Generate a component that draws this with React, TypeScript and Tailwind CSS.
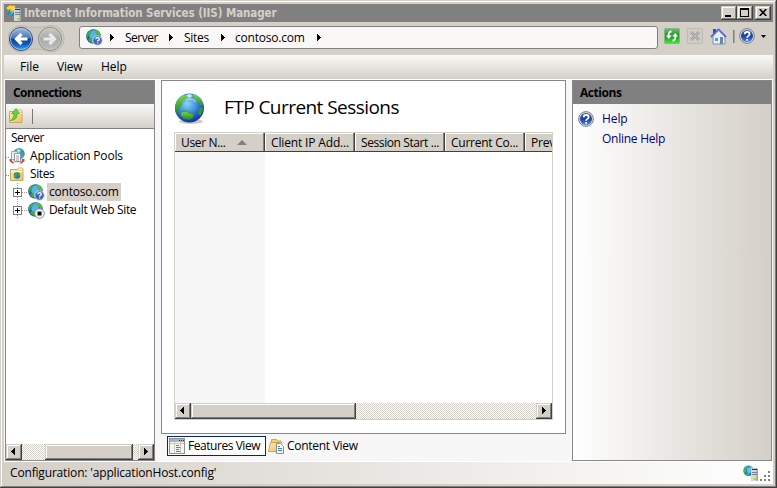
import type { ReactNode } from "react";

const raised =
  "bg-[#d4d0c8] shadow-[inset_-1px_-1px_0_#404040,inset_1px_1px_0_#d4d0c8,inset_-2px_-2px_0_#808080,inset_2px_2px_0_#fff]";
const checker =
  "bg-[repeating-conic-gradient(#ffffff_0_25%,#d4d0c8_0_50%)] bg-[length:2px_2px]";

function LargeGlobe() {
  return (
    <svg width="32" height="32" viewBox="0 0 32 32" className="mt-1 shrink-0">
      <defs>
        <radialGradient id="sea" cx=".42" cy=".35" r=".7">
          <stop offset="0" stopColor="#8ed4f2" />
          <stop offset=".45" stopColor="#3f92dc" />
          <stop offset=".8" stopColor="#1c48b8" />
          <stop offset="1" stopColor="#122a8c" />
        </radialGradient>
        <linearGradient id="land" x1="0" y1="0" x2="0" y2="1">
          <stop offset="0" stopColor="#7fd44c" />
          <stop offset="1" stopColor="#1c8a2a" />
        </linearGradient>
      </defs>
      <ellipse cx="17" cy="28.5" rx="12" ry="2.5" fill="#777" opacity=".4" />
      <circle cx="15.5" cy="15" r="14.5" fill="url(#sea)" />
      <path d="M1.5 12C3 6 6 3 10 2l3 1-1 3-3 2-1 4-3 3-1 4-2 1C1 17 1 14 1.500 12Z" fill="url(#land)" />
      <path d="M19 1c5 1 8 4 10 9l-1 4-3-3-2-4-3-1Z" fill="url(#land)" />
      <path d="M26 15l3-1c0 4-1 7-3 9l-2-3Z" fill="#2b9a3a" />
      <path d="M7 19l5-1 4 2 4 1-1 4-4 2-5-1-4-4Z" fill="url(#land)" stroke="#156b45" strokeWidth=".5" />
      <path d="M12 2l4-1 3 2-4 2Z" fill="#c9ecdb" />
      <path d="M12 7c4-2 8-1 10 2" stroke="#d9f5ff" strokeWidth="2" opacity=".45" fill="none" />
    </svg>
  );
}

function SiteGlobe({ badge }: { badge: "help" | "stop" }) {
  return (
    <svg width="17" height="17" viewBox="0 0 17 17" className="shrink-0">
      <circle cx="7.500" cy="7.500" r="7.300" fill="#1d55b4" />
      <path d="M5 2l4-1 2 4-2 5-4 1-2-4Z" fill="#57b4e8" />
      <path d="M1 5c1-3 3-4 5-4L5 3 4 5 2 7 1 10C0 8 0 6 1 5Z" fill="#3fae3c" />
      <path d="M9 .5c3 .5 5 2 5.500 5L13 7l-2-2-2-1Z" fill="#52bd3c" />
      <path d="M2.500 9.500l3-.5 2 2-1 3-2-.8-2-2Z" fill="#45ac38" />
      <circle cx="11.500" cy="11.500" r="4.800" fill={badge === "help" ? "#3e68b8" : "#f4f4f4"} stroke={badge === "help" ? "#dce4f2" : "#8d9297"} strokeWidth="1" />
      {badge === "help" && <path d="M9.800 10.200c0-2.200 3.500-2.200 3.500 0 0 1.200-1.700 1.200-1.700 2.300m0 .9v1.200" stroke="#fff" strokeWidth="1.300" fill="none" />}
      {badge === "stop" && <rect x="9.500" y="9.500" width="4" height="4" fill="#111" />}
    </svg>
  );
}

function HelpIcon() {
  return (
    <svg width="16" height="16" viewBox="0 0 16 16" className="shrink-0">
      <defs>
        <linearGradient id="helpBlue" x1="0" y1="0" x2="0" y2="1">
          <stop offset="0" stopColor="#3f62bb" />
          <stop offset=".5" stopColor="#1d3f9f" />
          <stop offset="1" stopColor="#4c8ce8" />
        </linearGradient>
      </defs>
      <circle cx="8" cy="8" r="7.400" fill="#d4d6da" stroke="#7d8188" />
      <circle cx="8" cy="8" r="6" fill="url(#helpBlue)" />
      <path d="M5.700 6.200c0-3.200 4.900-3.200 4.900 0 0 1.700-2.500 1.700-2.500 3.600M8.100 11v1.800" stroke="#fff" strokeWidth="1.700" fill="none" />
    </svg>
  );
}

function ServerIcon({ arrow = false }: { arrow?: boolean }) {
  return (
    <svg width="16" height="17" viewBox="0 0 16 17" className="shrink-0">
      <circle cx="5.500" cy="5.800" r="5.200" fill="#2478d4" />
      <path d="M4 3l4-1 1 4-3 3-2-2Z" fill="#63bdf0" />
      <path d="M1 4l3-3 2 1-3 2v3L1 8Z" fill="#3fbd3b" />
      <path d="M7 1l3 2v3L8 4Z" fill="#75dd54" />
      <path d="M3 8l3 1v2L3 10Z" fill="#3fbd3b" />
      {arrow && <path d="M0 3l4-3 3 1 2-1v6H4l1-2-3 1Z" fill="#ffd24a" stroke="#d8901c" strokeWidth=".5" />}
      <path d="M8 4l5.500-1 1.500 1v12H8Z" fill="#98a3ad" />
      <path d="M8 3.500h5.500V16H8Z" fill="#d2d8dd" />
      <path d="M9 4.500h5" stroke="#31383e" />
      <path d="M9 7.500h5M9 9.500h5" stroke="#78838d" />
      <rect x="11" y="13" width="2.500" height="2" fill="#a8e000" />
    </svg>
  );
}

function Folder({ kind }: { kind: "up" | "sites" | "content" }) {
  return (
    <svg width="16" height="16" viewBox="0 0 16 16" className="shrink-0">
      <defs>
        <linearGradient id="folder" x1="0" y1="0" x2="1" y2="1">
          <stop offset="0" stopColor="#fcedb4" />
          <stop offset="1" stopColor="#ecc169" />
        </linearGradient>
      </defs>
      {kind !== "content" && (
        <g>
          <path d="M1.500 3.500h7l1-1.500h4l.5 1.500v11H1.500Z" fill="url(#folder)" stroke="#cba85c" />
          <path d="M9.500 3h4" stroke="#fff8d7" />
          <path d="M2 5.500h12" stroke="#fff4cc" />
        </g>
      )}
      {kind === "up" && <path d="M2.500 12.500C5 11 6 9 6 5.500H3.500l4.500-5 3.500 5H9c.5 4-2 7-6.500 7Z" fill="#62d63e" stroke="#36962b" strokeWidth=".6" />}
      {kind === "sites" && (
        <g>
          <circle cx="8" cy="9.500" r="3.300" fill="#1b75ce" />
          <path d="M5 9l3-2.500v3L7 12l-2-1.500Zm4-2.500 2 2v2l-2-1Z" fill="#3eb633" />
        </g>
      )}
      {kind === "content" && (
        <g>
          <path d="M3.500 1.500h5l1 1.500h3.500v10H3.500Z" fill="#f2cf78" stroke="#cda450" />
          <path d="M.5 13.500l2-9h9l-2 9Z" fill="url(#folder)" stroke="#cda450" />
          <path d="M8.500 5.500h4l3 3v7h-7Z" fill="#f8fafd" stroke="#8592a4" />
          <path d="M10 8.500h2m-2 2h4m-4 2h4" stroke="#4778b5" />
        </g>
      )}
    </svg>
  );
}

function PoolsIcon() {
  return (
    <svg width="16" height="16" viewBox="0 0 16 16" className="shrink-0">
      <circle cx="10" cy="5.800" r="5.700" fill="#3f97dc" />
      <path d="M8 1l4 1-2 3-4-1Z" fill="#b0e2f6" />
      <path d="M12 .5l3 3 .5 4-2.500-2ZM5 3l3-2v2Z" fill="#3aac37" />
      <path d="M.5 12.500l2-1.500h11l2 1.500-2 2.500H3Z" fill="#e6e2df" />
      <path d="M.5 11v2l3 2.500h2L3 13V11Zm15 0v2l-3 2.500h-2L13 13v-2Z" fill="#cc4a40" />
      <path d="M2.500 3.500h6v8h-6Z" fill="#e8eef4" stroke="#9aa8b5" />
      <path d="M5.500 5.500h6v8h-6Z" fill="#fff" stroke="#8a98a5" />
      <path d="M7 8h3M7 10h3M7 12h3" stroke="#899cad" />
    </svg>
  );
}

function Arrow({ dir, className = "" }: { dir: "left" | "right"; className?: string }) {
  return (
    <svg width="4" height="7" viewBox="0 0 4 7" className={`shrink-0 ${className}`} shapeRendering="crispEdges">
      <path d={dir === "left" ? "M3 0h1v7H3V6H2V5H1V4H0V3h1V2h1V1h1Z" : "M0 0h1v1h1v1h1v1h1v1H3v1H2v1H1v1H0Z"} fill="#000" />
    </svg>
  );
}

function ScrollButton({ dir }: { dir: "left" | "right" }) {
  return (
    <div className={`flex h-4 w-4 shrink-0 pt-[4px] ${dir === "left" ? "pl-[5px]" : "pl-[6px]"} ${raised}`}>
      <Arrow dir={dir} />
    </div>
  );
}

function NavButtons() {
  return (
    <svg width="58" height="30" viewBox="0 0 58 30" className="shrink-0">
      <defs>
        <linearGradient id="back" x1="0" y1="0" x2="0" y2="1">
          <stop offset="0" stopColor="#a5bcdf" />
          <stop offset=".45" stopColor="#4a78bb" />
          <stop offset=".5" stopColor="#123f8e" />
          <stop offset=".75" stopColor="#1460c4" />
          <stop offset="1" stopColor="#38b0ff" />
        </linearGradient>
        <linearGradient id="next" x1="0" y1="0" x2="0" y2="1">
          <stop offset="0" stopColor="#cccac7" />
          <stop offset=".5" stopColor="#a9a9a8" />
          <stop offset="1" stopColor="#bfbfbe" />
        </linearGradient>
      </defs>
      <path d="M13 1.500Q28 5 43 1.500a13 13 0 0 1 0 26.500Q28 22 13 28A13 13 0 0 1 13 1.500Z" fill="#cbc8c1" stroke="#bdb9b2" />
      <circle cx="13" cy="15" r="11.500" fill="url(#back)" stroke="#3c4f72" />
      <circle cx="13" cy="15" r="10.500" fill="none" stroke="#c0d5ef" strokeWidth=".7" />
      <path d="M19.500 15H8.500m5-5-5 5 5 5" fill="none" stroke="#fff" strokeWidth="3.200" />
      <circle cx="42" cy="15" r="11.500" fill="url(#next)" stroke="#898989" />
      <circle cx="42" cy="15" r="10.500" fill="none" stroke="#d0d0d0" strokeWidth=".7" />
      <path d="M35.500 15h11m-5-5 5 5-5 5" fill="none" stroke="#e9e9e9" strokeWidth="3.200" />
    </svg>
  );
}

function ToolbarIcons() {
  return (
    <>
      <svg width="16" height="16" viewBox="0 0 16 16" className="ml-[6px] shrink-0">
        <defs>
          <linearGradient id="refresh" x1="0" y1="0" x2="0" y2="1">
            <stop offset="0" stopColor="#7db77a" />
            <stop offset=".5" stopColor="#16941d" />
            <stop offset="1" stopColor="#41ed31" />
          </linearGradient>
        </defs>
        <rect x=".5" y=".5" width="15" height="15" rx="1" fill="url(#refresh)" stroke="#86b586" />
        <path d="M7.500 3.500C5 3.500 4.500 5 4.700 8.500M8.500 12.500c2.500 0 3-1.500 2.800-5" fill="none" stroke="#fff" strokeWidth="1.800" />
        <path d="M1.800 7.500h6L4.800 11ZM8.200 8.500h6L11.200 5Z" fill="#fff" />
      </svg>
      <svg width="16" height="16" viewBox="0 0 16 16" className="ml-[7px] shrink-0">
        <rect x=".5" y=".5" width="15" height="15" rx="1" fill="#cfccc6" stroke="#bebbb5" />
        <path d="M4 4l8 8m0-8-8 8" stroke="#a2a2a0" strokeWidth="2.800" />
        <path d="M4 4l8 8m0-8-8 8" stroke="#c1c0be" strokeWidth="1" />
      </svg>
      <svg width="17" height="17" viewBox="0 0 17 17" className="ml-[7px] shrink-0">
        <path d="M3 1h3v5H3Z" fill="#324fc3" />
        <path d="M3 8l6-6 6 6v8H3Z" fill="#e9eef6" stroke="#7e91ae" />
        <path d="M1 9l7.500-7.500L16 9" fill="none" stroke="#4b62c4" strokeWidth="1.800" />
        <path d="M2 8.700l6.500-6.500 6.500 6.500" stroke="#a5b0ea" fill="none" strokeWidth=".6" />
        <path d="M10 9h3v7h-3Z" fill="#6d83a8" />
        <path d="M5 10h3v3H5Z" fill="#5f9ad2" />
      </svg>
      <div className="ml-[6px] h-[13px] w-[2px] border-r border-[#aaa69f] bg-[#808080]" />
      <div className="ml-[4px] flex"><HelpIcon /></div>
      <svg width="5" height="3" viewBox="0 0 5 3" className="ml-[6px]"><path d="M0 0h5L2.500 3Z" /></svg>
    </>
  );
}

function TreeRow({ children, label, selected = false, nested = false, tracking }: { children: ReactNode; label: string; selected?: boolean; nested?: boolean; tracking: string }) {
  return (
    <div className={`flex h-[18px] items-center ${nested ? "pl-[6px]" : ""}`}>
      {!nested && <div className="mt-[2px] w-[3px] shrink-0 border-t border-dotted border-[#999]" />}
      {children}
      <span className={`flex h-[18px] items-center px-[2px] ${nested ? "ml-[2px]" : "ml-[3px]"} ${tracking} ${selected ? "bg-[#d4d0c8]" : ""}`}>{label}</span>
    </div>
  );
}

function Expander() {
  return (
    <svg width="16" height="18" viewBox="0 0 16 18" className="shrink-0" shapeRendering="crispEdges">
      <path d="M5.500 0v18M10 9.500h6" stroke="#999" strokeDasharray="1 1" />
      <rect x="1.500" y="5.500" width="8" height="8" fill="#fff" stroke="#808080" />
      <path d="M3 9.500h5M5.500 7v5" stroke="#000" />
    </svg>
  );
}

const columns = [
  { name: "User N...", width: "w-[90px]", tracking: "tracking-[-0.35px]" },
  { name: "Client IP Add...", width: "w-[90px]", tracking: "tracking-[-0.15px]" },
  { name: "Session Start ...", width: "w-[90px]", tracking: "tracking-[-0.4px]" },
  { name: "Current Co...", width: "w-[80px]", tracking: "tracking-[-0.25px]" },
  { name: "Prev", width: "w-[27px]", tracking: "tracking-[-0.2px]" },
];

export default function App() {
  return (
    <div className="h-[488px] w-[777px] overflow-hidden whitespace-nowrap bg-[#d4d0c8] p-1 font-['Open_Sans','Noto_Sans',sans-serif] text-[12px] leading-[18px] text-black shadow-[inset_-1px_-1px_0_#404040,inset_1px_1px_0_#d4d0c8,inset_-2px_-2px_0_#808080,inset_2px_2px_0_#fff]">
      <header className="flex h-[18px] items-center bg-[#808080] pl-[2px] pr-[2px]">
        <ServerIcon arrow />
        <h1 className="ml-[2px] font-['DejaVu_Sans_Condensed','DejaVu_Sans',sans-serif] text-[11.500px] font-bold tracking-[-0.070px] text-[#d4d0c8]">Internet Information Services (IIS) Manager</h1>
        <div className="ml-auto flex">
          <div className={`h-[14px] w-4 pl-1 pt-[9px] ${raised}`}><div className="h-[2px] w-[6px] bg-black" /></div>
          <div className={`h-[14px] w-4 pl-[3px] pt-[2px] ${raised}`}><div className="h-[9px] w-[9px] border border-t-2 border-black" /></div>
          <div className={`ml-[2px] flex h-[14px] w-4 justify-center pt-[3px] ${raised}`}>
            <svg width="8" height="7" viewBox="0 0 8 7"><path d="M.7 0l6.600 7M7.300 0L.7 7" stroke="#000" strokeWidth="1.600" /></svg>
          </div>
        </div>
      </header>

      <nav className="flex h-[33px] items-start pl-1">
        <div className="mt-[2px] flex h-[30px]"><NavButtons /></div>
        <div className="ml-[13px] mt-1 flex h-[23px] w-[579px] items-center rounded-[3px] border border-[#808080] bg-[#f9f8f6] pl-[6px]">
          <SiteGlobe badge="help" />
          <Arrow dir="right" className="ml-[7px]" />
          <span className="ml-[11px] w-[36px] tracking-[-0.500px]">Server</span>
          <Arrow dir="right" className="ml-[8px]" />
          <span className="ml-[11px] w-[28px] tracking-[-0.300px]">Sites</span>
          <Arrow dir="right" className="ml-[9px]" />
          <span className="ml-[10px] w-[72px] tracking-[-0.220px]">contoso.com</span>
          <Arrow dir="right" className="ml-[10px]" />
        </div>
        <div className="flex h-[28px] items-center"><ToolbarIcons /></div>
      </nav>

      <div className="flex h-6 items-center bg-gradient-to-b from-[#faf9f7] to-[#d4d0c8] pl-4">
        <span className="w-[37px]">File</span><span className="w-[44px] tracking-[-0.200px]">View</span><span>Help</span>
      </div>

      <main className="flex h-[383px] border-y border-white bg-[#f7f7f7] pl-px">
        <aside className="flex h-[381px] w-[150px] flex-col border border-[#888] bg-white">
          <h2 className="h-[23px] shrink-0 bg-[#808080] pl-[7px] pt-[3px] font-bold tracking-[-0.550px]">Connections</h2>
          <div className="flex h-[25px] shrink-0 items-center border-b border-[#808080] bg-gradient-to-b from-[#faf9f7] to-[#d4d0c8] pl-[2px]">
            <Folder kind="up" /><div className="ml-[8px] mt-px h-[15px] w-px bg-[#777]" />
          </div>
          <div className="flex-1">
            <div className="pl-[5px] tracking-[-0.500px]">Server</div>
            <TreeRow label="Application Pools" tracking="tracking-[-0.200px]"><PoolsIcon /></TreeRow>
            <TreeRow label="Sites" tracking="tracking-[-0.400px]"><Folder kind="sites" /></TreeRow>
            <TreeRow label="contoso.com" selected nested tracking="tracking-[-0.220px]"><Expander /><SiteGlobe badge="help" /></TreeRow>
            <TreeRow label="Default Web Site" nested tracking="tracking-[-0.350px]"><Expander /><SiteGlobe badge="stop" /></TreeRow>
          </div>
          <div className={`flex h-4 shrink-0 ${checker}`}>
            <ScrollButton dir="left" /><div className={`ml-[23px] w-[88px] ${raised}`} /><div className="ml-auto"><ScrollButton dir="right" /></div>
          </div>
        </aside>

        <section className="ml-[6px] w-[405px]">
          <div className="h-[354px] border border-[#888] bg-white pl-3">
            <div className="flex h-[51px] items-center">
              <LargeGlobe />
              <h2 className="ml-[18px] text-[19px] leading-[26px] tracking-[-0.550px]">FTP Current Sessions</h2>
            </div>
            <div className="flex h-[288px] w-[379px] flex-col border border-[#d4d0c8]">
              <div className="flex h-[19px] shrink-0 overflow-hidden bg-[#d4d0c8]">
                {columns.map((c, i) => (
                  <div key={c.name} className={`flex h-[19px] shrink-0 items-center overflow-hidden border-b border-[#404040] pl-[6px] pt-px ${c.width} ${c.tracking} ${i < 4 ? "shadow-[inset_-1px_0_0_#404040,inset_-2px_0_0_#808080,inset_1px_1px_0_#fff]" : "shadow-[inset_1px_1px_0_#fff]"}`}>
                    {c.name}
                    {i === 0 && <svg width="10" height="5" viewBox="0 0 10 5" className="ml-auto mr-[18px]"><path d="M0 5h10L5 0Z" fill="#808080" /></svg>}
                  </div>
                ))}
              </div>
              <div className="flex-1"><div className="h-full w-[90px] bg-[#f7f7f7]" /></div>
              <div className={`flex h-4 shrink-0 ${checker}`}>
                <ScrollButton dir="left" /><div className={`w-[165px] ${raised}`} /><div className="ml-auto"><ScrollButton dir="right" /></div>
              </div>
            </div>
          </div>
          <div className="flex pl-[6px] pt-[2px]">
            <button className="flex h-5 w-[99px] items-center border border-[#0a246a] bg-white pl-px">
              <svg width="16" height="16" viewBox="0 0 16 16" className="shrink-0" shapeRendering="crispEdges">
                <rect x=".5" y=".5" width="15" height="15" fill="#f6f5ef" stroke="#8c9299" />
                <path d="M1 2h14" stroke="#a9b3bd" strokeWidth="3" />
                <path d="M10 2h1m1 0h1m1 0h1" stroke="#333" />
                <path d="M5.500 4v11M11.500 4v11M1 5.500h14" stroke="#c8c9c3" />
                <path d="M7 7.500h3M7 9.500h4M7 11.500h3M7 13.500h4" stroke="#717a75" />
              </svg>
              <span className="ml-[3px] tracking-[-0.450px]">Features View</span>
            </button>
            <button className="ml-[2px] flex h-5 items-center"><Folder kind="content" /><span className="ml-[3px] tracking-[-0.280px]">Content View</span></button>
          </div>
        </section>

        <aside className="ml-[6px] h-[381px] w-[200px] border border-[#888] bg-gradient-to-r from-white to-[#d4d0c8]">
          <h2 className="h-[23px] bg-[#808080] pl-[7px] pt-[3px] font-bold tracking-[-0.450px]">Actions</h2>
          <div className="flex flex-col pl-[5px] pt-[5px] text-[#000080]">
            <a className="flex h-5 items-center"><HelpIcon /><span className="ml-2 tracking-[-0.100px]">Help</span></a>
            <a className="h-5 pl-6 pt-px tracking-[-0.250px]">Online Help</a>
          </div>
        </aside>
      </main>

      <footer className="flex h-[22px] items-center bg-gradient-to-r from-[#d4d0c8] to-white pl-[6px] pr-[2px]">
        <span className="tracking-[-0.170px]">Configuration: 'applicationHost.config'</span>
        <div className="ml-auto flex items-end">
          <ServerIcon />
          <svg width="11" height="12" viewBox="0 0 11 12" className="ml-px" shapeRendering="crispEdges" fill="#808080">
            <path d="M8 1h2v2H8ZM4 5h2v2H4Zm4 0h2v2H8ZM0 9h2v2H0Zm4 0h2v2H4Zm4 0h2v2H8Z" />
          </svg>
        </div>
      </footer>
    </div>
  );
}
